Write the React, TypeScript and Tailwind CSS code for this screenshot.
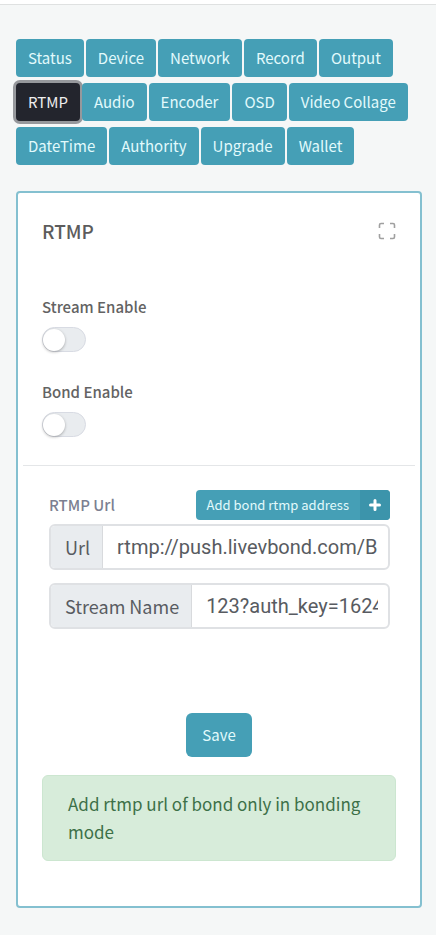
import { useState } from "react";

const tabs = [
  "Status",
  "Device",
  "Network",
  "Record",
  "Output",
  "RTMP",
  "Audio",
  "Encoder",
  "OSD",
  "Video Collage",
  "DateTime",
  "Authority",
  "Upgrade",
  "Wallet",
];

const fields = [
  { id: "url", label: "Url", value: "rtmp://push.livevbond.com/B" },
  { id: "stream-name", label: "Stream Name", value: "123?auth_key=1624518000" },
];

function Toggle({ id, label }: { id: string; label: string }) {
  return (
    <div className="flex flex-col items-start gap-2">
      <label htmlFor={id} className="text-[15px] leading-6 font-medium text-[#636363]">
        {label}
      </label>
      <input
        id={id}
        type="checkbox"
        role="switch"
        className="flex h-[25px] w-11 appearance-none items-center rounded-full border border-[#d8dbe3] bg-[#e9ecef] before:size-[22px] before:rounded-full before:bg-white before:shadow-[0_1px_3px_rgba(0,0,0,0.3)] checked:justify-end checked:bg-[#459fb6]"
      />
    </div>
  );
}

function ExpandIcon() {
  return (
    <svg viewBox="0 0 18 18" className="size-[18px]" fill="none" stroke="currentColor" strokeWidth="1.6">
      <path d="M1.5 6V3Q1.5 1.5 3 1.5H6M12 1.5H15Q16.5 1.5 16.5 3V6M16.5 12V15Q16.5 16.5 15 16.5H12M6 16.5H3Q1.5 16.5 1.5 15V12" />
    </svg>
  );
}

function PlusIcon() {
  return (
    <svg viewBox="0 0 12 12" className="size-3" stroke="currentColor" strokeWidth="3" strokeLinecap="round">
      <path d="M6 1.5V10.5M1.5 6H10.5" />
    </svg>
  );
}

export default function App() {
  const [active, setActive] = useState("RTMP");

  return (
    <div className="min-h-screen bg-[#f5f7f7] pb-7 font-['Noto_Sans_CJK_SC',sans-serif]">
      <header className="h-[5px] border-b border-[#dfe1e1] bg-white" />

      <nav className="flex flex-wrap gap-x-0.5 gap-y-1.5 pt-[34px] pr-3 pl-4">
        {tabs.map((tab) => (
          <button
            key={tab}
            type="button"
            onClick={() => setActive(tab)}
            className={`h-[38px] rounded px-3 text-[15px] leading-6 ${
              tab === active
                ? "bg-[#23252d] text-[#eeeeee] shadow-[0_0_0_3px_#96989c]"
                : "bg-[#459fb6] text-[#e2fafc]"
            }`}
          >
            {tab}
          </button>
        ))}
      </nav>

      <main className="mt-[26px] mr-3.5 ml-4 rounded border-2 border-[#84c0d0] bg-white pb-[45px]">
        <div className="flex items-center justify-between px-6 pt-6">
          <h1 className="text-[19px] leading-7 font-medium text-[#5c5c5c]">RTMP</h1>
          <button type="button" aria-label="Fullscreen" className="text-[#a0a0a0]">
            <ExpandIcon />
          </button>
        </div>

        <div className="flex flex-col gap-7 px-6 pt-[50px] pb-7">
          <Toggle id="stream-enable" label="Stream Enable" />
          <Toggle id="bond-enable" label="Bond Enable" />
        </div>

        <hr className="mx-[5px] border-[#e4e6e8]" />

        <section className="pt-6 pr-[30px] pl-[31px]">
          <div className="flex items-center justify-between">
            <h2 className="text-[15px] leading-6 font-medium text-[#7c7f91]">RTMP Url</h2>
            <button type="button" className="flex h-[30px] items-center overflow-hidden rounded bg-[#459fb6] text-[13px] text-[#e2fafc]">
              <span className="px-[11px]">Add bond rtmp address</span>
              <span className="flex h-full w-[30px] items-center justify-center bg-[#3c94ab] text-white">
                <PlusIcon />
              </span>
            </button>
          </div>

          <div className="mt-1 flex flex-col gap-[13px]">
            {fields.map((field) => (
              <div key={field.id} className="flex h-[46px] overflow-hidden rounded-md border-2 border-[#dfe1e4] text-[#585b61]">
                <label htmlFor={field.id} className="flex items-center border-r border-[#d8dadd] bg-[#e9ecef] pr-3 pl-3.5 text-[18px] whitespace-nowrap">
                  {field.label}
                </label>
                <div className="flex min-w-0 flex-1 pr-2.5 pl-3.5">
                  <input
                    id={field.id}
                    type="text"
                    defaultValue={field.value}
                    className="w-full min-w-0 bg-white font-['Roboto',sans-serif] text-[20px] outline-none"
                  />
                </div>
              </div>
            ))}
          </div>
        </section>

        <div className="flex justify-center pt-[84px]">
          <button type="button" className="h-11 rounded-md bg-[#459fb6] px-4 text-[15px] text-[#e2fafc]">
            Save
          </button>
        </div>

        <p className="mx-6 mt-[18px] rounded-md border border-[#cce6d0] bg-[#d7ecda] px-[25px] py-3.5 text-[17px] leading-7 text-[#3d7048]">
          Add rtmp url of bond only in bonding mode
        </p>
      </main>
    </div>
  );
}
